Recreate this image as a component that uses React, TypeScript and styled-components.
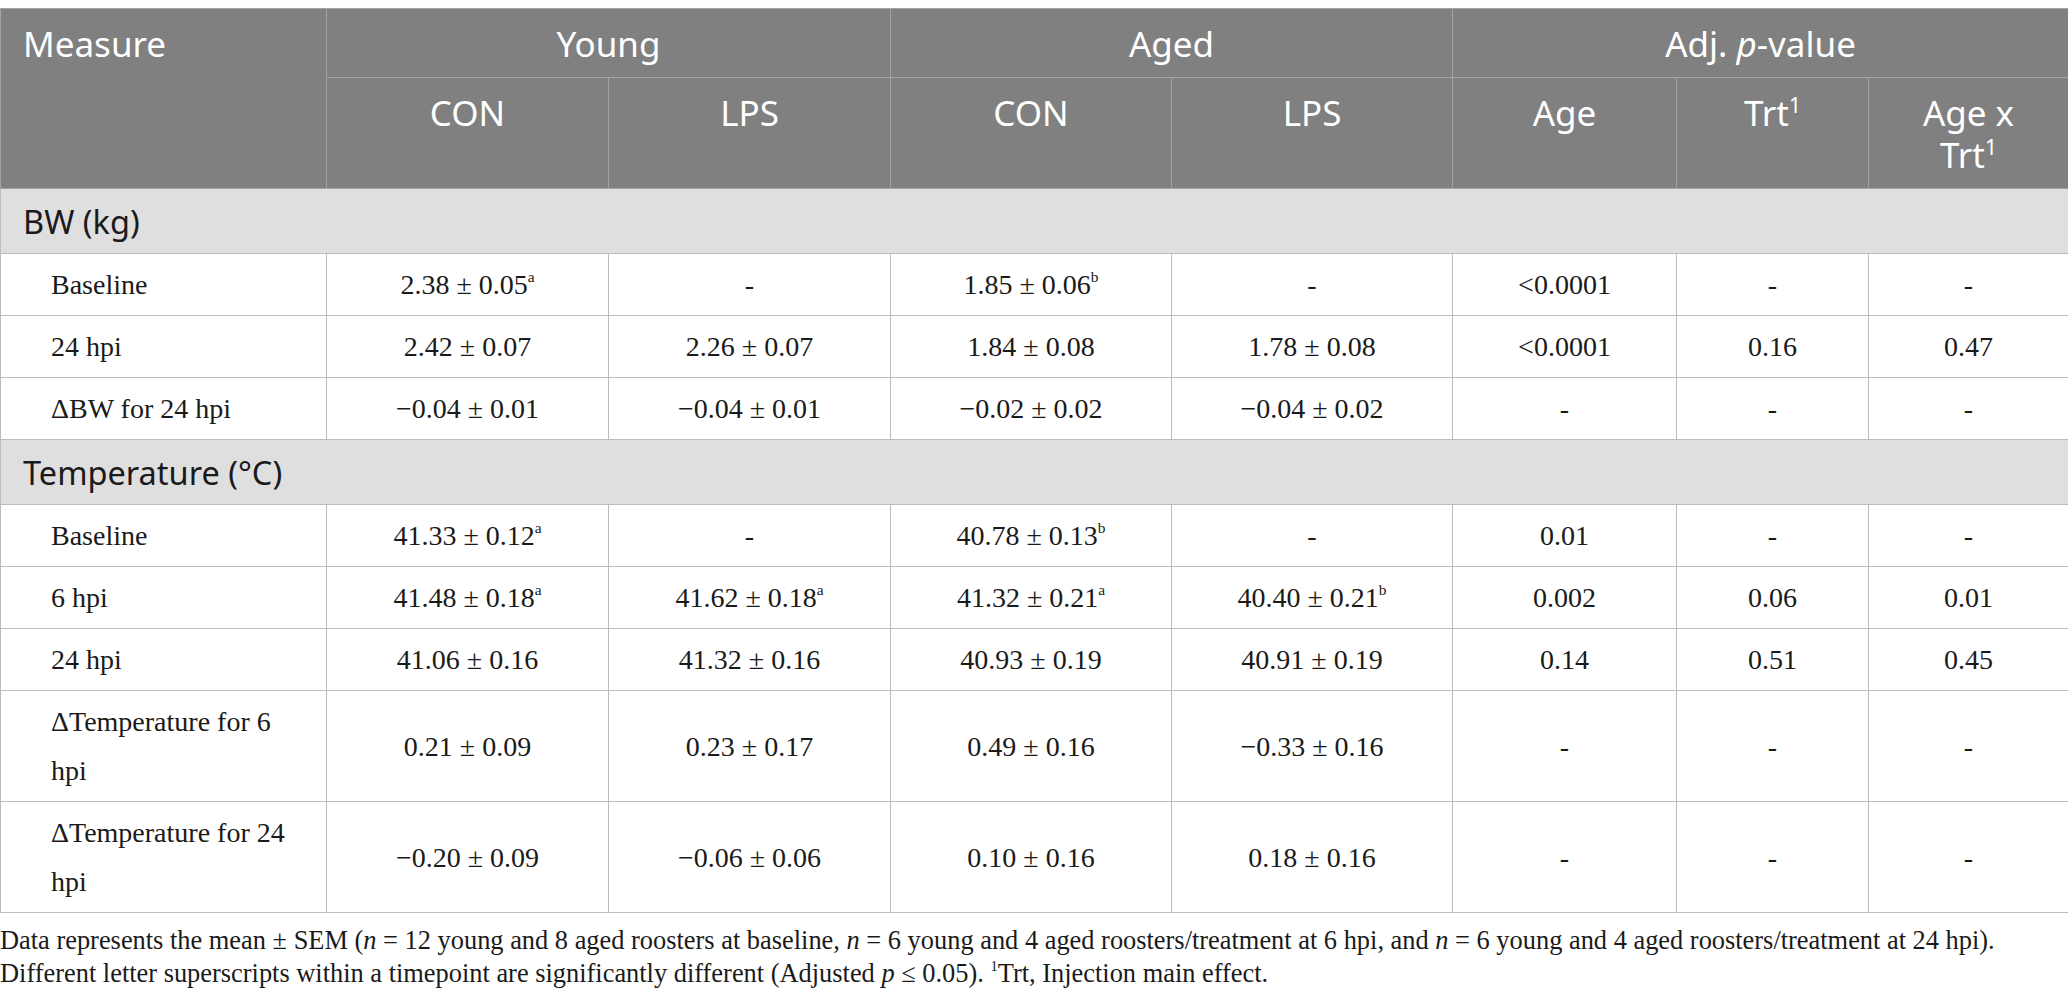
import React from "react";
import styled, { createGlobalStyle } from "styled-components";

const GlobalStyle = createGlobalStyle`
  html, body { margin: 0; padding: 0; background: #ffffff; }
  body { font-family: "Liberation Serif", "Times New Roman", serif; color: #1a1a1a; }
`;

const Page = styled.div`
  padding-top: 8px;
  width: 2068px;
`;

const Table = styled.table`
  width: 2068px;
  border-collapse: collapse;
  table-layout: fixed;
  border: 1px solid #bdbdbd;
`;

const Col = styled.col<{ $w: number }>`
  width: ${(p) => p.$w}px;
`;

const HeadCell = styled.th<{ $align?: "left" | "center" }>`
  background: #7f807f;
  color: #ffffff;
  font-family: "Noto Sans", "Open Sans", sans-serif;
  font-weight: 400;
  font-size: 35px;
  line-height: 42px;
  padding: 14px 10px 12px;
  text-align: ${(p) => p.$align ?? "center"};
  vertical-align: top;
  border: 1px solid #a3a3a3;
  ${(p) => (p.$align === "left" ? "padding-left: 22px;" : "")}
  sup { font-size: 0.6em; line-height: 0; vertical-align: 0.6em; }
  i { font-style: italic; }
`;

const SectionCell = styled.td`
  background: #e0dfe0;
  color: #1a1a1a;
  font-family: "Noto Sans", "Open Sans", sans-serif;
  font-size: 32.5px;
  line-height: 42px;
  padding: 12px 22px 10px;
  text-align: left;
  border: 1px solid #bdbdbd;
`;

const LabelCell = styled.td`
  font-size: 28px;
  line-height: 49px;
  padding: 6px 28px 6px 50px;
  text-align: left;
  vertical-align: middle;
  border: 1px solid #bdbdbd;
`;

const ValueCell = styled.td`
  font-size: 28px;
  line-height: 49px;
  padding: 6px 8px;
  text-align: center;
  vertical-align: middle;
  border: 1px solid #bdbdbd;
  sup { font-size: 0.55em; line-height: 0; vertical-align: 0.75em; }
`;

const Note = styled.p`
  margin: 11px 0 0;
  font-size: 26.4px;
  line-height: 33px;
  color: #1a1a1a;
  i { font-style: italic; }
  sup { font-size: 0.55em; line-height: 0; vertical-align: 0.75em; }
`;

type Cell = { v: string; s?: string };
type Row = { label: string; cells: Cell[] };
type Section = { title: string; rows: Row[] };

const c = (v: string, s?: string): Cell => ({ v, s });
const D = c("-");

const sections: Section[] = [
  {
    title: "BW (kg)",
    rows: [
      { label: "Baseline", cells: [c("2.38 ± 0.05", "a"), D, c("1.85 ± 0.06", "b"), D, c("<0.0001"), D, D] },
      { label: "24 hpi", cells: [c("2.42 ± 0.07"), c("2.26 ± 0.07"), c("1.84 ± 0.08"), c("1.78 ± 0.08"), c("<0.0001"), c("0.16"), c("0.47")] },
      { label: "ΔBW for 24 hpi", cells: [c("−0.04 ± 0.01"), c("−0.04 ± 0.01"), c("−0.02 ± 0.02"), c("−0.04 ± 0.02"), D, D, D] },
    ],
  },
  {
    title: "Temperature (°C)",
    rows: [
      { label: "Baseline", cells: [c("41.33 ± 0.12", "a"), D, c("40.78 ± 0.13", "b"), D, c("0.01"), D, D] },
      { label: "6 hpi", cells: [c("41.48 ± 0.18", "a"), c("41.62 ± 0.18", "a"), c("41.32 ± 0.21", "a"), c("40.40 ± 0.21", "b"), c("0.002"), c("0.06"), c("0.01")] },
      { label: "24 hpi", cells: [c("41.06 ± 0.16"), c("41.32 ± 0.16"), c("40.93 ± 0.19"), c("40.91 ± 0.19"), c("0.14"), c("0.51"), c("0.45")] },
      { label: "ΔTemperature for 6 hpi", cells: [c("0.21 ± 0.09"), c("0.23 ± 0.17"), c("0.49 ± 0.16"), c("−0.33 ± 0.16"), D, D, D] },
      { label: "ΔTemperature for 24 hpi", cells: [c("−0.20 ± 0.09"), c("−0.06 ± 0.06"), c("0.10 ± 0.16"), c("0.18 ± 0.16"), D, D, D] },
    ],
  },
];

const widths = [326, 282, 282, 281, 281, 224, 192, 200];

export default function App() {
  return (
    <>
      <GlobalStyle />
      <Page>
        <Table>
          <colgroup>
            {widths.map((w, i) => (
              <Col key={i} $w={w} />
            ))}
          </colgroup>
          <thead>
            <tr>
              <HeadCell $align="left" rowSpan={2}>Measure</HeadCell>
              <HeadCell colSpan={2}>Young</HeadCell>
              <HeadCell colSpan={2}>Aged</HeadCell>
              <HeadCell colSpan={3}>
                Adj. <i>p</i>-value
              </HeadCell>
            </tr>
            <tr>
              <HeadCell>CON</HeadCell>
              <HeadCell>LPS</HeadCell>
              <HeadCell>CON</HeadCell>
              <HeadCell>LPS</HeadCell>
              <HeadCell>Age</HeadCell>
              <HeadCell>
                Trt<sup>1</sup>
              </HeadCell>
              <HeadCell>
                Age x
                <br />
                Trt<sup>1</sup>
              </HeadCell>
            </tr>
          </thead>
          <tbody>
            {sections.map((sec) => (
              <React.Fragment key={sec.title}>
                <tr>
                  <SectionCell colSpan={8}>{sec.title}</SectionCell>
                </tr>
                {sec.rows.map((r) => (
                  <tr key={sec.title + r.label}>
                    <LabelCell>{r.label}</LabelCell>
                    {r.cells.map((cell, i) => (
                      <ValueCell key={i}>
                        {cell.v}
                        {cell.s && <sup>{cell.s}</sup>}
                      </ValueCell>
                    ))}
                  </tr>
                ))}
              </React.Fragment>
            ))}
          </tbody>
        </Table>
        <Note>
          Data represents the mean ± SEM (<i>n</i> = 12 young and 8 aged roosters at baseline, <i>n</i> = 6 young and 4
          aged roosters/treatment at 6 hpi, and <i>n</i> = 6 young and 4 aged roosters/treatment at 24 hpi). Different
          letter superscripts within a timepoint are significantly different (Adjusted <i>p</i> ≤ 0.05). <sup>1</sup>Trt,
          Injection main effect.
        </Note>
      </Page>
    </>
  );
}
